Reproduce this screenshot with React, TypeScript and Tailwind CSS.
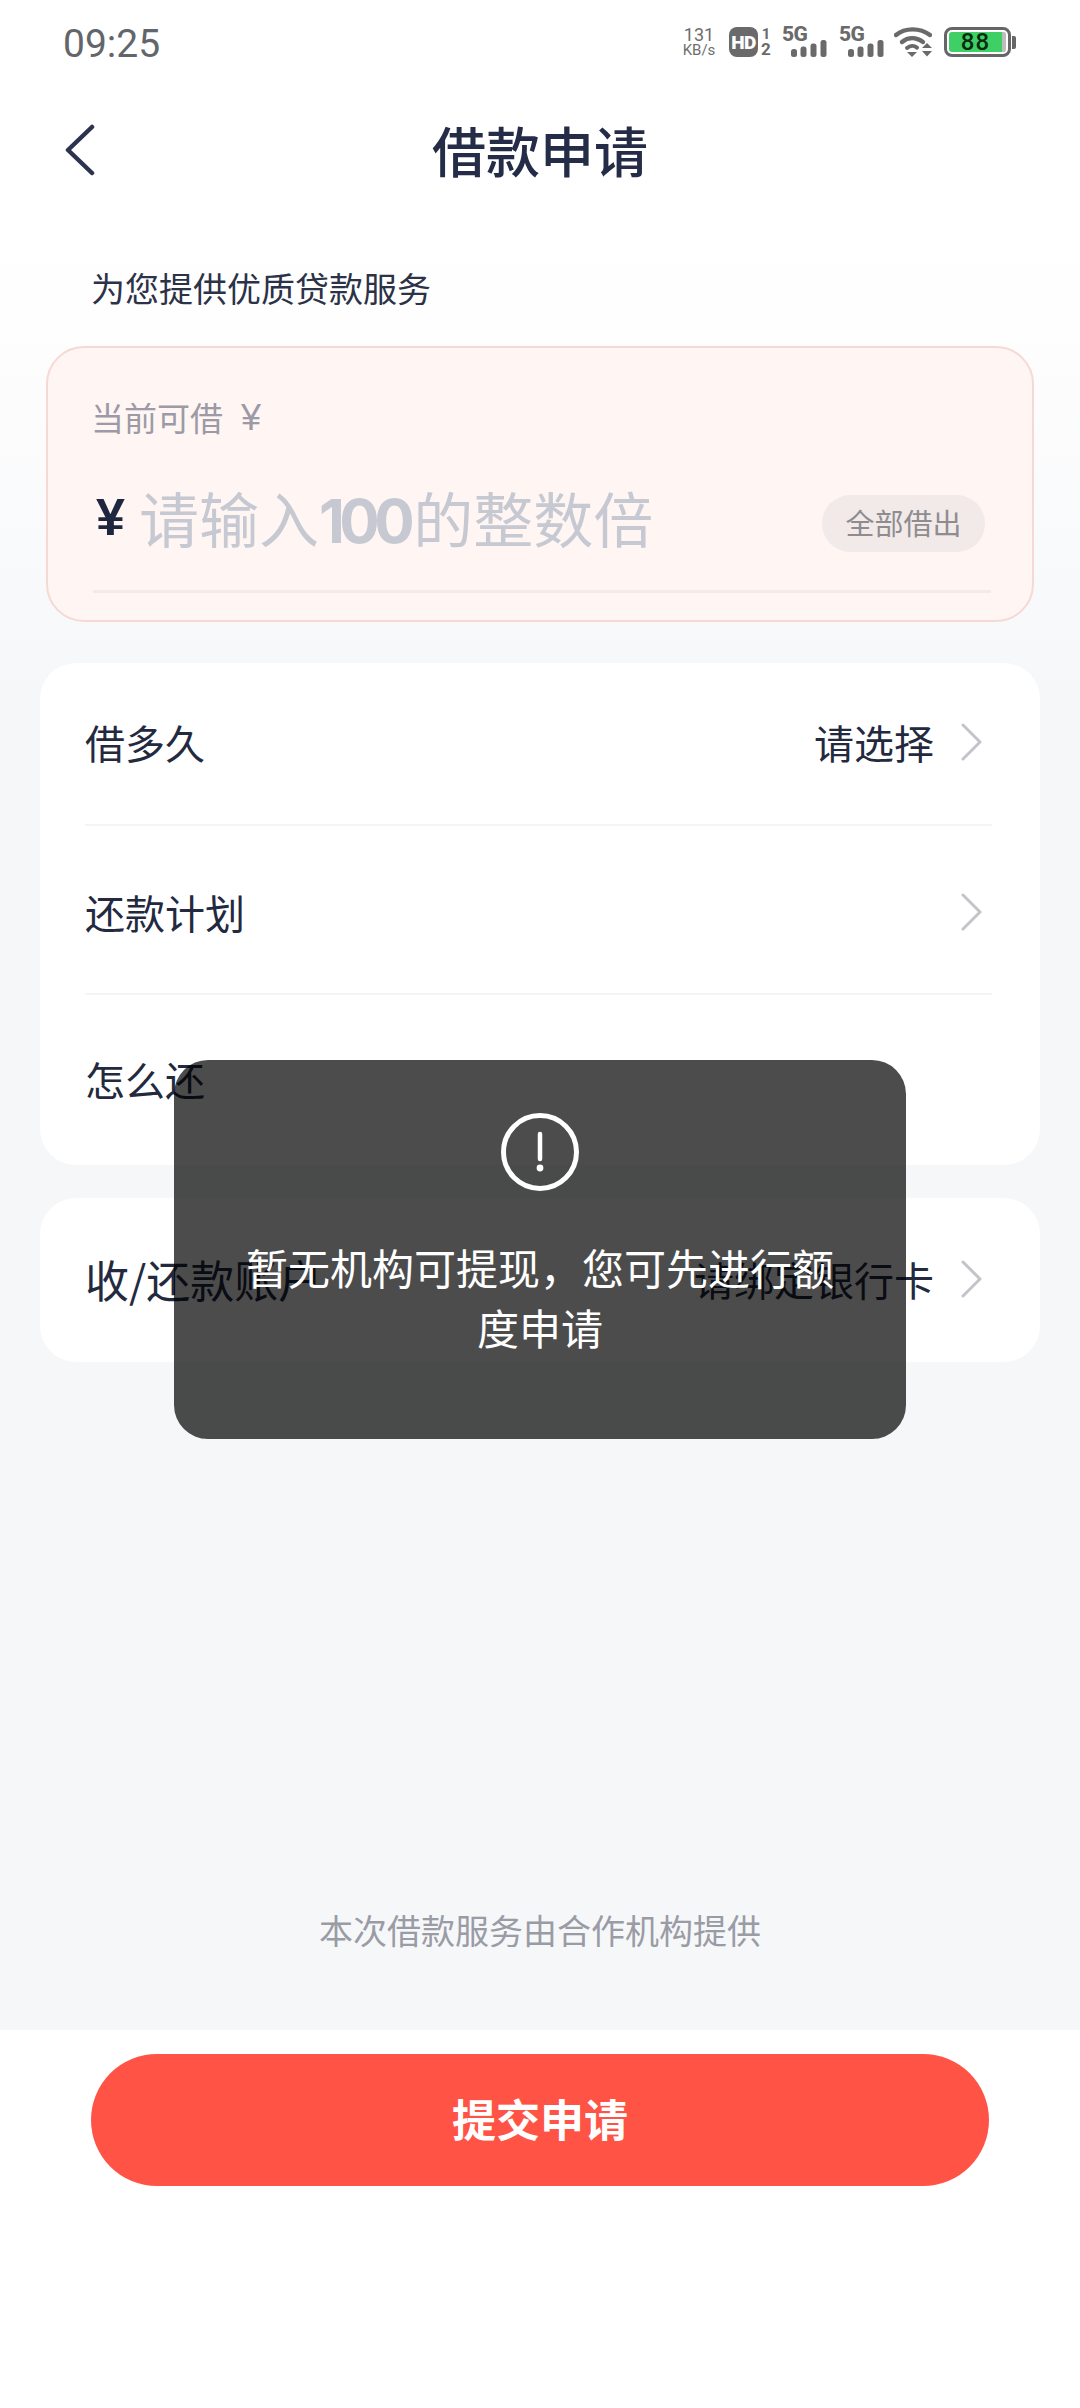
import React from "react";

const CJK = { fontFamily: '"Noto Sans CJK SC", "Noto Sans", sans-serif' };

function Chevron() {
  return (
    <svg width="24" height="38" viewBox="0 0 24 38" fill="none" className="shrink-0 mr-[8px]">
      <path d="M3 2 L20 19 L3 36" stroke="#c3c4c9" strokeWidth="3" strokeLinecap="round" strokeLinejoin="round" />
    </svg>
  );
}

function Signal() {
  return (
    <div className="relative w-[46px] h-[30px]">
      <span className="absolute left-0 top-[-2px] font-['Roboto',sans-serif] font-extrabold text-[#6a6a6a] text-[21px] leading-[19px] tracking-[-0.5px]">5G</span>
      <svg className="absolute left-[9px] top-[13px]" width="36" height="17" viewBox="0 0 36 17" fill="#6a6a6a">
        <rect x="0" y="9" width="6" height="8" rx="2.5" />
        <rect x="9.5" y="6.5" width="6" height="10.5" rx="2.5" />
        <rect x="19.5" y="3.5" width="6" height="13.5" rx="2.5" />
        <rect x="29.5" y="0" width="6" height="17" rx="2.5" />
      </svg>
    </div>
  );
}

function StatusIcons() {
  return (
    <div className="flex items-center">
      <div className="w-[36px] flex flex-col items-center font-['Roboto',sans-serif] text-[#6e6e6e] mr-[12px]">
        <span className="text-[18px] leading-[16px]">131</span>
        <span className="text-[15px] leading-[14px]">KB/s</span>
      </div>
      <div className="relative w-[29px] h-[30px] rounded-[8px] bg-[#6a6a6a] flex items-center justify-center">
        <span className="font-['Roboto',sans-serif] font-black text-white text-[19px] leading-none tracking-[-0.5px]">HD</span>
      </div>
      <div className="w-[12px] ml-[2px] mr-[10px] flex flex-col items-center font-['Roboto',sans-serif] font-bold text-[#6a6a6a]">
        <span className="text-[15px] leading-[15px]">1</span>
        <span className="text-[17px] leading-[15px]">2</span>
      </div>
      <Signal />
      <div className="w-[11px]" />
      <Signal />
      <svg className="ml-[9px]" width="38" height="30" viewBox="0 0 38 30" fill="none">
        <path d="M2 8 C11 0.5 26 0.5 36 8" stroke="#6a6a6a" strokeWidth="4.4" strokeLinecap="round" />
        <path d="M8 15 C14 10 22 10 29 15" stroke="#6a6a6a" strokeWidth="4.4" strokeLinecap="round" />
        <path d="M13 21 C16 18.4 20 18.4 23 20.6" stroke="#6a6a6a" strokeWidth="4" strokeLinecap="round" />
        <path d="M13 25 H23 L18 30 Z" fill="#6a6a6a" />
        <path d="M28 21 L33 16 L38 21 Z" fill="#6a6a6a" />
        <path d="M28 24 H38 L33 29.5 Z" fill="#6a6a6a" />
      </svg>
      <div className="ml-[12px] flex items-center">
        <div className="w-[67px] h-[30px] rounded-[8px] border-[3px] border-[#666666] p-[2px] flex bg-white">
          <div className="w-[53px] bg-[#3ed065] rounded-l-[3px] flex items-center justify-center">
            <span className="font-['Roboto',sans-serif] font-medium text-[#0b2a12] text-[24px] leading-none tracking-[1px]">88</span>
          </div>
          <div className="flex-1 bg-[#bdbdbd] rounded-r-[2px]" />
        </div>
        <div className="w-[4px] h-[13px] bg-[#666666] rounded-r-[2px] ml-[1px]" />
      </div>
    </div>
  );
}

export default function App() {
  return (
    <div className="relative w-[1080px] h-[2408px] overflow-hidden flex flex-col bg-[linear-gradient(180deg,#ffffff_0px,#ffffff_240px,#f6f7f9_720px,#f6f7f9_100%)]" style={CJK}>
      {/* status bar */}
      <div className="h-[88px] shrink-0 flex items-start justify-between pt-[27px] pl-[63px] pr-[64px]">
        <span className="font-['Roboto',sans-serif] text-[39px] leading-[34px] text-[#62666a]">09:25</span>
        <StatusIcons />
      </div>

      {/* header */}
      <div className="h-[128px] shrink-0 grid grid-cols-[1fr_auto_1fr] items-center pl-[64px] pb-[5px]">
        <svg width="32" height="52" viewBox="0 0 32 52" fill="none">
          <path d="M28 3 L4 26 L28 49" stroke="#2b3350" strokeWidth="4.5" strokeLinecap="round" strokeLinejoin="round" />
        </svg>
        <h1 className="text-[54px] leading-[64px] font-medium text-[#252c47] pr-[64px]">借款申请</h1>
        <div />
      </div>

      <p className="mt-[48px] ml-[91px] text-[34px] leading-[48px] text-[#2c3247]">为您提供优质贷款服务</p>

      {/* amount card */}
      <section className="mt-[34px] mx-[46px] h-[276px] shrink-0 rounded-[38px] border-2 border-[#f6d9d5] bg-[#fff5f3] pl-[43px] pr-[41px] flex flex-col">
        <div className="mt-[46px] h-[48px] flex items-center text-[33px] text-[#9b9aa6]">
          <span>当前可借</span>
          <span className="ml-[18px] font-['Liberation_Sans',sans-serif] text-[36px]">¥</span>
        </div>
        <div className="mt-[39px] h-[76px] flex items-center">
          <span className="w-[48px] pl-[5px] shrink-0 font-['Liberation_Sans',sans-serif] font-bold text-[52px] text-[#1f2740] pb-[4px]">¥</span>
          <span className="flex-1 text-[60px] leading-[76px] text-[#c6c9d2] whitespace-nowrap">
            请输入<span className="font-['Inter',sans-serif] font-bold text-[60px] tracking-[-5.5px] mr-[4px]">100</span>的整数倍
          </span>
          <span className="mt-[8px] mr-[6px] h-[57px] w-[163px] shrink-0 rounded-full bg-[#f1eae9] flex items-center justify-center text-[29px] text-[#8f8c8f]">全部借出</span>
        </div>
        <div className="mt-[33px] ml-[2px] h-[3px] bg-[#f1ebea]" />
      </section>

      {/* options card */}
      <section className="mt-[41px] mx-[40px] h-[502px] shrink-0 rounded-[36px] bg-white pl-[45px] pr-[48px] flex flex-col text-[40px] text-[#232a40]">
        <div className="h-[163px] shrink-0 flex items-center justify-between border-b-2 border-[#f3f4f6] pb-[4px]">
          <span>借多久</span>
          <div className="flex items-center gap-[26px]">
            <span>请选择</span>
            <Chevron />
          </div>
        </div>
        <div className="h-[169px] shrink-0 flex items-center justify-between border-b-2 border-[#f3f4f6] pt-[4px]">
          <span>还款计划</span>
          <Chevron />
        </div>
        <div className="flex-1 flex items-center pb-[2px]">
          <span>怎么还</span>
        </div>
      </section>

      {/* account card */}
      <section className="mt-[33px] mx-[40px] h-[164px] shrink-0 rounded-[36px] bg-white pl-[45px] pr-[48px] pb-[3px] flex items-center justify-between text-[#232a40]">
        <span className="text-[44px]">收/还款账户</span>
        <div className="flex items-center gap-[26px] text-[40px]">
          <span>请绑定银行卡</span>
          <Chevron />
        </div>
      </section>

      {/* footer note */}
      <div className="flex-1 flex flex-col justify-end items-center pb-[76px]">
        <p className="text-[34px] leading-[48px] text-[#9a9ca5]">本次借款服务由合作机构提供</p>
      </div>

      {/* bottom bar */}
      <div className="h-[378px] shrink-0 bg-white pt-[24px] px-[91px]">
        <button className="w-full h-[132px] rounded-full bg-[#ff5345] text-white font-bold text-[44px] pb-[4px]">提交申请</button>
      </div>

      {/* toast */}
      <div className="absolute left-[174px] top-[1060px] w-[732px] h-[379px] rounded-[34px] bg-black/70 flex flex-col items-center pt-[53px]">
        <svg width="78" height="78" viewBox="0 0 78 78" fill="none">
          <circle cx="39" cy="39" r="36.5" stroke="#ffffff" strokeWidth="5" />
          <path d="M39 21 V46" stroke="#ffffff" strokeWidth="4.5" strokeLinecap="round" />
          <circle cx="39" cy="55" r="3.4" fill="#ffffff" />
        </svg>
        <p className="mt-[46px] w-[590px] text-center text-[42px] leading-[60px] text-white">暂无机构可提现，您可先进行额度申请</p>
      </div>
    </div>
  );
}
